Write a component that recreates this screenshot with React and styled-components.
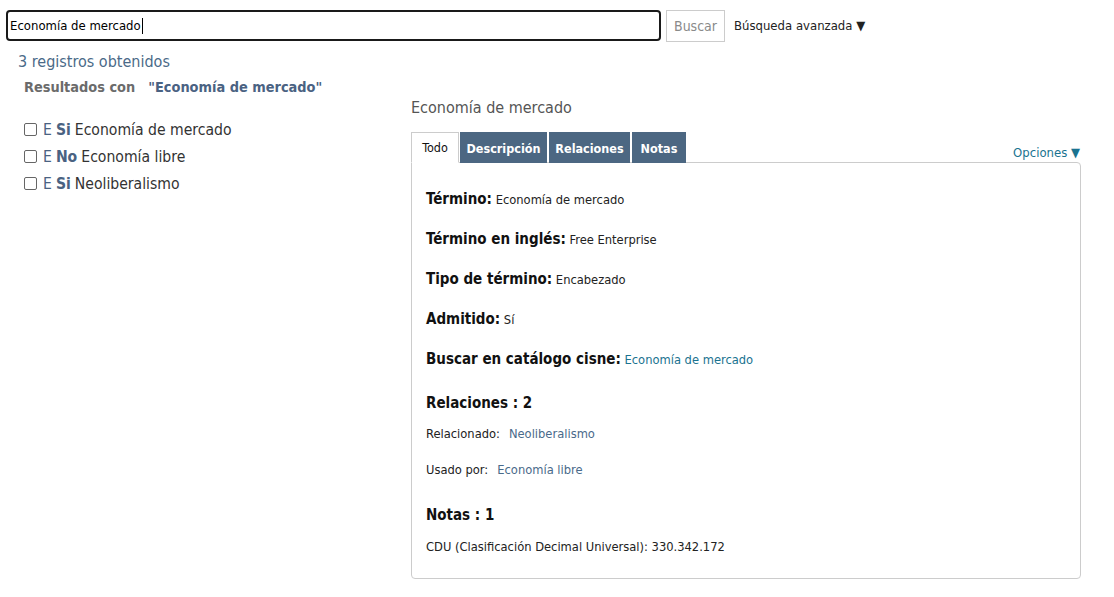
import React from "react";
import styled, { createGlobalStyle } from "styled-components";

const Global = createGlobalStyle`
  body {
    margin: 0;
    background: #fff;
    font-family: "DejaVu Sans Condensed", "DejaVu Sans", sans-serif;
    color: #222;
  }
`;

const Page = styled.div`
  width: 1114px;
  height: 597px;
  padding: 10px 0 0 6px;
  box-sizing: border-box;
`;

const SearchBar = styled.div`
  display: flex;
  align-items: center;
  height: 31px;
`;

const SearchInput = styled.div`
  width: 655px;
  height: 31px;
  box-sizing: border-box;
  border: 2px solid #1a1a1a;
  border-radius: 4px;
  display: flex;
  align-items: center;
  padding-left: 2px;
  font-size: 13px;
  color: #000;
`;

const Caret = styled.span`
  display: inline-block;
  width: 1px;
  height: 16px;
  background: #000;
  margin-left: 1px;
`;

const SearchButton = styled.button`
  margin-left: 5px;
  height: 32px;
  width: 59px;
  border: 1px solid #ccc;
  background: #fff;
  color: #8a8a8a;
  font-family: inherit;
  font-size: 14px;
  padding: 0;
`;

const Advanced = styled.span`
  margin-left: 9px;
  font-size: 13px;
  color: #222;
`;

const Body = styled.div`
  display: flex;
  margin-top: 10px;
`;

const Left = styled.div`
  width: 405px;
  padding-left: 12px;
  box-sizing: border-box;
`;

const Count = styled.div`
  font-size: 16px;
  color: #4a6a88;
  height: 22px;
  line-height: 22px;
`;

const Heading = styled.div`
  margin: 3px 0 0 6px;
  font-size: 14.4px;
  font-weight: bold;
  color: #6b6b6b;
  line-height: 22px;
  span {
    color: #4a6282;
    margin-left: 13px;
  }
`;

const ResultList = styled.ul`
  list-style: none;
  margin: 18px 0 0 6px;
  padding: 0;
`;

const Result = styled.li`
  display: flex;
  align-items: center;
  height: 27px;
  font-size: 15.6px;
  color: #333;
`;

const Box = styled.span`
  width: 11px;
  height: 11px;
  border: 1px solid #666;
  border-radius: 2px;
  margin-right: 6px;
`;

const Prefix = styled.span`
  color: #4a6282;
  margin-right: 4px;
`;

const Flag = styled.b`
  color: #4a6282;
  margin-right: 4px;
`;

const Right = styled.div`
  width: 670px;
  padding-top: 46px;
`;

const Title = styled.div`
  font-size: 16px;
  color: #555;
  line-height: 22px;
`;

const TabRow = styled.div`
  display: flex;
  align-items: flex-end;
  margin-top: 12px;
`;

const Tab = styled.div`
  width: ${(p) => p.$w}px;
  height: 31px;
  box-sizing: border-box;
  display: flex;
  align-items: center;
  justify-content: center;
  font-size: 12.5px;
  font-weight: ${(p) => (p.$active ? "normal" : "bold")};
  color: ${(p) => (p.$active ? "#111" : "#fff")};
  background: ${(p) => (p.$active ? "#fff" : "#4c6782")};
  border: 1px solid ${(p) => (p.$active ? "#ccc" : "#4c6782")};
  border-bottom: ${(p) => (p.$active ? "1px solid #fff" : "none")};
  position: relative;
  top: 1px;
  margin-right: ${(p) => (p.$active ? 1 : 2)}px;
`;

const Options = styled.div`
  margin-left: auto;
  font-size: 13px;
  color: #1a7390;
  margin-bottom: 2px;
  margin-right: 1px;
`;

const Panel = styled.div`
  border: 1px solid #ccc;
  border-radius: 0 4px 4px 4px;
  height: 417px;
  box-sizing: border-box;
  padding: 24px 14px 0;
`;

const Field = styled.div`
  font-size: 12.8px;
  color: #222;
  height: 40px;
  line-height: 24px;
  b {
    font-size: 15px;
    color: #111;
  }
`;

const Link = styled.span`
  color: ${(p) => p.$color || "#1a7390"};
`;

const Section = styled.div`
  font-size: 15px;
  font-weight: bold;
  color: #111;
  margin-top: ${(p) => p.$top}px;
  line-height: 24px;
`;

const Small = styled.div`
  font-size: 12.8px;
  color: #222;
  margin-top: ${(p) => p.$top}px;
  line-height: 20px;
  span {
    margin-left: 9px;
  }
`;

const results = [
  { flag: "Si", text: "Economía de mercado" },
  { flag: "No", text: "Economía libre" },
  { flag: "Si", text: "Neoliberalismo" },
];

const tabs = [
  { label: "Todo", w: 48, active: true },
  { label: "Descripción", w: 87 },
  { label: "Relaciones", w: 81 },
  { label: "Notas", w: 54 },
];

export default function App() {
  return (
    <Page>
      <Global />
      <SearchBar>
        <SearchInput>
          Economía de mercado<Caret />
        </SearchInput>
        <SearchButton>Buscar</SearchButton>
        <Advanced>Búsqueda avanzada ▼</Advanced>
      </SearchBar>
      <Body>
        <Left>
          <Count>3 registros obtenidos</Count>
          <Heading>
            Resultados con<span>"Economía de mercado"</span>
          </Heading>
          <ResultList>
            {results.map((r, i) => (
              <Result key={i}>
                <Box />
                <Prefix>E</Prefix>
                <Flag>{r.flag}</Flag>
                {r.text}
              </Result>
            ))}
          </ResultList>
        </Left>
        <Right>
          <Title>Economía de mercado</Title>
          <TabRow>
            {tabs.map((t) => (
              <Tab key={t.label} $active={t.active} $w={t.w}>
                {t.label}
              </Tab>
            ))}
            <Options>Opciones ▼</Options>
          </TabRow>
          <Panel>
            <Field>
              <b>Término:</b> Economía de mercado
            </Field>
            <Field>
              <b>Término en inglés:</b> Free Enterprise
            </Field>
            <Field>
              <b>Tipo de término:</b> Encabezado
            </Field>
            <Field>
              <b>Admitido:</b> Sí
            </Field>
            <Field>
              <b>Buscar en catálogo cisne:</b> <Link>Economía de mercado</Link>
            </Field>
            <Section $top={4}>Relaciones : 2</Section>
            <Small $top={9}>
              Relacionado:<Link $color="#4a6a8a">Neoliberalismo</Link>
            </Small>
            <Small $top={16}>
              Usado por:<Link $color="#4a6a8a">Economía libre</Link>
            </Small>
            <Section $top={23}>Notas : 1</Section>
            <Small $top={10}>CDU (Clasificación Decimal Universal): 330.342.172</Small>
          </Panel>
        </Right>
      </Body>
    </Page>
  );
}
